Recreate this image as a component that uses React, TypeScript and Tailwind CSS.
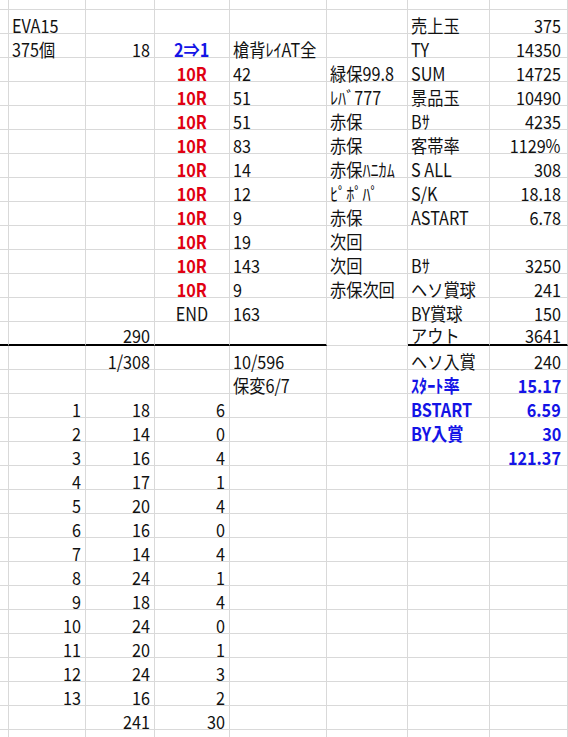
import React from 'react';

type Tone = 'red' | 'blue';
type Cell = string | { t: string; tone: Tone } | null;

const R = (t: string): Cell => ({ t, tone: 'red' });
const B = (t: string): Cell => ({ t, tone: 'blue' });

// columns: gutter, A, B, C, D, E, F, G
const rows: Cell[][] = [
  [null, 'EVA15', null, null, null, null, '売上玉', '375'],
  [null, '375個', '18', B('2⇒1'), '槍背ﾚｲAT全', null, 'TY', '14350'],
  [null, null, null, R('10R'), '42', '緑保99.8', 'SUM', '14725'],
  [null, null, null, R('10R'), '51', 'ﾚﾊﾞ777', '景品玉', '10490'],
  [null, null, null, R('10R'), '51', '赤保', 'Bｻ', '4235'],
  [null, null, null, R('10R'), '83', '赤保', '客帯率', '1129%'],
  [null, null, null, R('10R'), '14', '赤保ﾊﾆｶﾑ', 'S ALL', '308'],
  [null, null, null, R('10R'), '12', 'ﾋﾟﾎﾟﾊﾟ', 'S/K', '18.18'],
  [null, null, null, R('10R'), '9', '赤保', 'ASTART', '6.78'],
  [null, null, null, R('10R'), '19', '次回', null, null],
  [null, null, null, R('10R'), '143', '次回', 'Bｻ', '3250'],
  [null, null, null, R('10R'), '9', '赤保次回', 'ヘソ賞球', '241'],
  [null, null, null, 'END', '163', null, 'BY賞球', '150'],
  [null, null, '290', null, null, null, 'アウト', '3641'],
  [null, null, '1/308', null, '10/596', null, 'ヘソ入賞', '240'],
  [null, null, null, null, '保変6/7', null, B('ｽﾀｰﾄ率'), B('15.17')],
  [null, '1', '18', '6', null, null, B('BSTART'), B('6.59')],
  [null, '2', '14', '0', null, null, B('BY入賞'), B('30')],
  [null, '3', '16', '4', null, null, null, B('121.37')],
  [null, '4', '17', '1', null, null, null, null],
  [null, '5', '20', '4', null, null, null, null],
  [null, '6', '16', '0', null, null, null, null],
  [null, '7', '14', '4', null, null, null, null],
  [null, '8', '24', '1', null, null, null, null],
  [null, '9', '18', '4', null, null, null, null],
  [null, '10', '24', '0', null, null, null, null],
  [null, '11', '20', '1', null, null, null, null],
  [null, '12', '24', '3', null, null, null, null],
  [null, '13', '16', '2', null, null, null, null],
  [null, null, '241', '30', null, null, null, null],
];

const isNum = (s: string) => /^[\d.%/]+$/.test(s);

type Side = 'l' | 'r' | 'c';

function side(col: number, text: string): Side {
  if (col === 7) return 'r';
  if (col >= 4) return 'l';
  if (col === 3) return isNum(text) ? 'r' : 'c';
  return isNum(text) ? 'r' : 'l';
}

const boxBySide: Record<Side, string> = {
  l: 'justify-start pl-[3px]',
  r: 'justify-end pr-[4px]',
  c: 'justify-center',
};

const originBySide: Record<Side, string> = {
  l: 'origin-left',
  r: 'origin-right',
  c: 'origin-center',
};

const emptyRow = (h: string) =>
  Array.from({ length: 8 }).map((_, i) => (
    <div key={i} className={`${h} border-r border-b border-[#d9d9d9]`} />
  ));

export default function App() {
  return (
    <div
      className="w-[568px] h-[737px] overflow-hidden bg-white text-[18px] text-[#111]"
      style={{ fontFamily: '"Noto Sans CJK JP", sans-serif' }}
    >
      <div className="grid grid-cols-[9px_77px_69px_75px_97px_81px_82px_78px]">
        {emptyRow('h-[10px]')}
        {rows.map((row, r) =>
          row.map((cell, c) => {
            // heavy rule under the totals row, skipped in column E
            const thick = r === 13 && c !== 5;
            const text = cell == null ? '' : typeof cell === 'string' ? cell : cell.t;
            const tone = cell && typeof cell !== 'string' ? cell.tone : null;
            const s = text ? side(c, text) : 'l';
            return (
              <div
                key={`${r}-${c}`}
                className={`h-[24px] flex items-end whitespace-nowrap border-r border-[#d9d9d9] ${
                  thick ? 'border-b-2 border-b-black' : 'border-b'
                } ${text ? boxBySide[s] : ''} ${c === 7 && text ? 'pr-[6px]' : ''}`}
              >
                {text && (
                  <span
                    className={`inline-block leading-[18px] scale-x-[0.9] ${originBySide[s]} ${
                      thick ? 'mb-0' : 'mb-[-1px]'
                    } ${
                      tone === 'red'
                        ? 'text-[#e00012] font-bold'
                        : tone === 'blue'
                        ? 'text-[#1414e6] font-bold'
                        : ''
                    }`}
                  >
                    {text}
                  </span>
                )}
              </div>
            );
          })
        )}
        {emptyRow('h-[10px]')}
      </div>
    </div>
  );
}
